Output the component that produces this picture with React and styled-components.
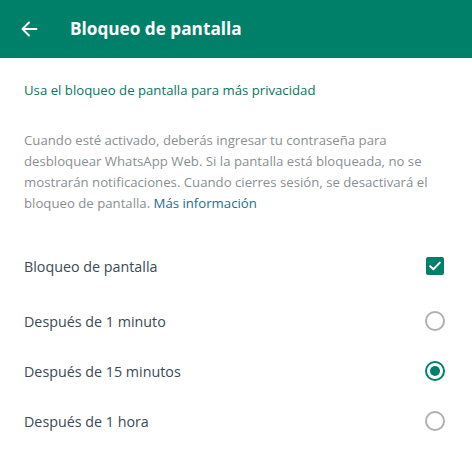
import React, { useState } from "react";
import styled, { createGlobalStyle } from "styled-components";

const Global = createGlobalStyle`
  html, body { margin: 0; padding: 0; background: #ffffff; }
  body { font-family: "Open Sans", "Noto Sans", sans-serif; }
  * { box-sizing: border-box; }
`;

const Page = styled.div`
  width: 472px;
  min-height: 453px;
  background: #ffffff;
`;

const Header = styled.header`
  height: 58px;
  background: #008069;
  display: flex;
  align-items: center;
  padding-left: 20px;
  gap: 32px;
  color: #ffffff;
`;

const BackButton = styled.button`
  border: 0;
  background: none;
  padding: 0;
  width: 18px;
  height: 18px;
  display: flex;
  align-items: center;
  justify-content: center;
  color: #ffffff;
  cursor: pointer;
`;

const Title = styled.h1`
  margin: 0;
  font-size: 17.2px;
  font-weight: 700;
  line-height: 20px;
`;

const Content = styled.div`
  padding: 22px 28px 0 24px;
`;

const Lead = styled.p`
  margin: 0;
  font-size: 13.2px;
  line-height: 20px;
  color: #0b7560;
`;

const Note = styled.p`
  margin: 30px 0 27px;
  font-size: 13.2px;
  line-height: 21px;
  color: #8a8f93;
`;

const Link = styled.a`
  color: #1b6f8f;
  text-decoration: none;
`;

const Row = styled.label`
  height: 50px;
  display: flex;
  align-items: center;
  justify-content: space-between;
  font-size: 14.3px;
  color: #3b4a54;
  cursor: pointer;
  margin-bottom: ${(p) => (p.$gap ? "5px" : "0")};
`;

const CheckBox = styled.span`
  width: 18px;
  height: 18px;
  border-radius: 2px;
  background: ${(p) => (p.$on ? "#008069" : "transparent")};
  border: ${(p) => (p.$on ? "0" : "2px solid #8696a0")};
  display: flex;
  align-items: center;
  justify-content: center;
`;

const Radio = styled.span`
  width: 20px;
  height: 20px;
  border-radius: 50%;
  margin-right: -1px;
  border: 2px solid ${(p) => (p.$on ? "#008069" : "#b0b0b0")};
  display: flex;
  align-items: center;
  justify-content: center;
  &::after {
    content: "";
    width: 10px;
    height: 10px;
    border-radius: 50%;
    background: #008069;
    display: ${(p) => (p.$on ? "block" : "none")};
  }
`;

const options = ["Después de 1 minuto", "Después de 15 minutos", "Después de 1 hora"];

export default function App() {
  const [locked, setLocked] = useState(true);
  const [choice, setChoice] = useState(1);
  return (
    <Page>
      <Global />
      <Header>
        <BackButton aria-label="Volver">
          <svg width="18" height="18" viewBox="0 0 18 18" fill="none">
            <path d="M16.5 9H2.5M9 2.5L2.5 9L9 15.5" stroke="currentColor" strokeWidth="1.9" strokeLinecap="round" strokeLinejoin="round" />
          </svg>
        </BackButton>
        <Title>Bloqueo de pantalla</Title>
      </Header>
      <Content>
        <Lead>Usa el bloqueo de pantalla para más privacidad</Lead>
        <Note>
          Cuando esté activado, deberás ingresar tu contraseña para desbloquear WhatsApp Web. Si la pantalla está bloqueada, no se mostrarán notificaciones. Cuando cierres sesión, se desactivará el bloqueo de pantalla. <Link href="#">Más información</Link>
        </Note>
        <Row $gap onClick={() => setLocked(!locked)}>
          Bloqueo de pantalla
          <CheckBox $on={locked}>
            {locked && (
              <svg width="12" height="10" viewBox="0 0 12 10" fill="none">
                <path d="M1.2 5.2L4.4 8.2L10.8 1.6" stroke="#ffffff" strokeWidth="2" strokeLinecap="round" strokeLinejoin="round" />
              </svg>
            )}
          </CheckBox>
        </Row>
        {options.map((o, i) => (
          <Row key={o} onClick={() => setChoice(i)}>
            {o}
            <Radio $on={choice === i} />
          </Row>
        ))}
      </Content>
    </Page>
  );
}
